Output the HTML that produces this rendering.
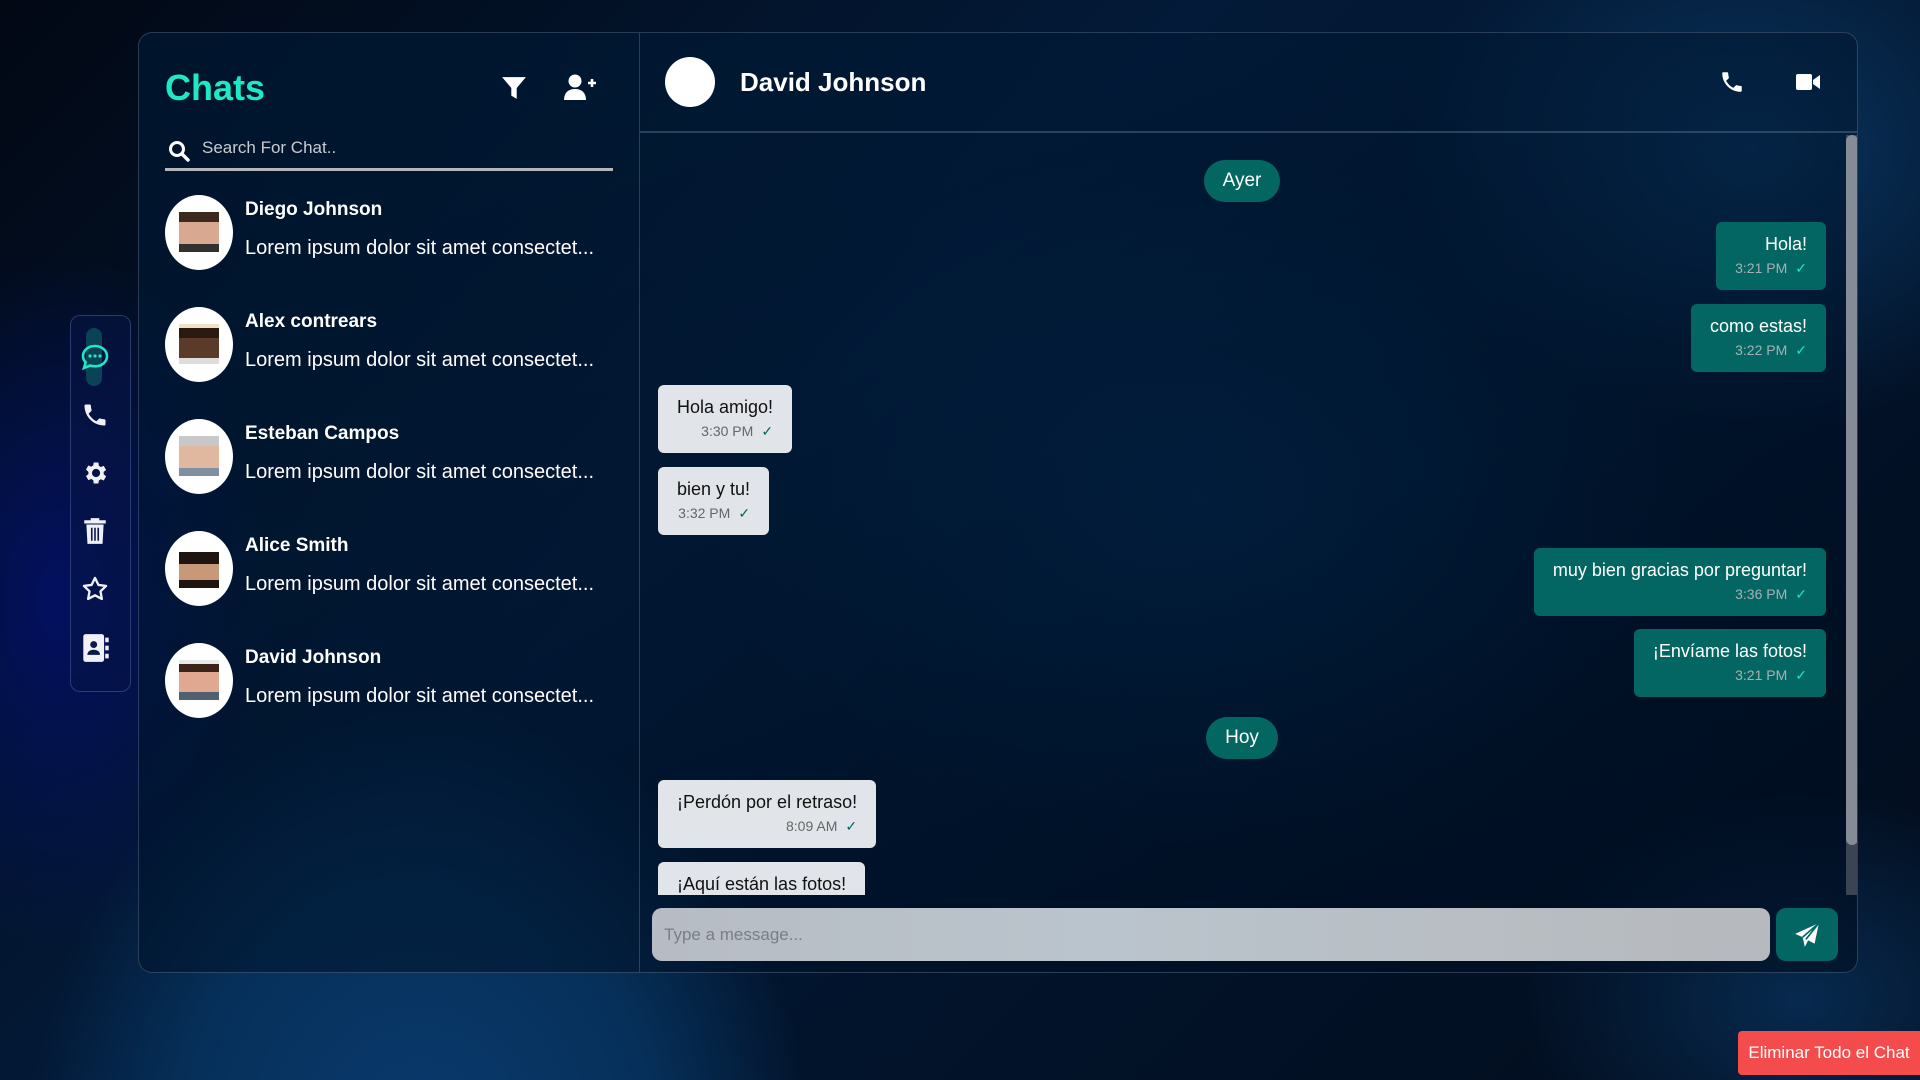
<!DOCTYPE html>
<html><head><meta charset="utf-8"><style>
*{box-sizing:border-box;margin:0;padding:0}
body{width:1920px;height:1080px;overflow:hidden;font-family:"Liberation Sans",sans-serif;position:relative;
background:
radial-gradient(ellipse 520px 600px at 420px 1150px,#0a3a6e 0%,#06305a 45%,rgba(4,30,60,0) 75%),
radial-gradient(ellipse 700px 500px at 1200px 500px,#03284e 0%,rgba(3,30,60,0) 70%),
radial-gradient(ellipse 500px 400px at 1750px 150px,#0a3560 0%,rgba(5,30,60,0) 70%),
radial-gradient(ellipse 400px 300px at 1800px 1000px,#072a4f 0%,rgba(5,30,60,0) 70%),
radial-gradient(ellipse 300px 500px at 60px 600px,#031060 0%,rgba(3,16,96,0) 70%),
linear-gradient(135deg,#020814 0%,#031a38 40%,#021228 70%,#030d1d 100%);}
.panel{position:absolute;left:138px;top:32px;width:1720px;height:941px;border:1px solid rgba(120,140,170,.35);border-radius:14px;
background:linear-gradient(160deg,rgba(0,30,60,.55),rgba(0,12,30,.55));overflow:hidden}
.left{position:absolute;left:0;top:0;width:501px;height:100%;border-right:1px solid rgba(120,140,170,.35)}
.chats{position:absolute;left:26px;top:34px;font-size:36px;font-weight:bold;color:#1de9c6}
.ico{position:absolute}
.search{position:absolute;left:26px;top:96px;width:448px;height:42px;border-bottom:3px solid #b4b6ba}
.search span{position:absolute;left:37px;top:9px;color:#c8cbd0;font-size:17px}
.item{position:absolute;left:26px;width:460px;height:80px}
.av{position:absolute;left:0;top:0;width:68px;height:75px;border-radius:50%;background:#fff}
.av .ph{position:absolute;left:14px;top:17px;width:40px;height:40px;background:linear-gradient(#3a2a20 0 25%,#d8a890 25% 80%,#303030 80%)}
.nm{position:absolute;left:80px;top:4px;color:#fff;font-weight:bold;font-size:19px}
.pv{position:absolute;left:80px;top:42px;color:#fff;font-size:20px;white-space:nowrap}
.right{position:absolute;left:501px;top:0;right:0;height:100%}
.hdr{position:absolute;left:0;right:0;top:0;height:100px;border-bottom:2px solid rgba(120,140,170,.35)}
.hav{position:absolute;left:25px;top:24px;width:50px;height:50px;border-radius:50%;background:#fff}
.hnm{position:absolute;left:100px;top:34px;color:#fff;font-size:26px;font-weight:bold}
.sb{position:absolute;left:1206px;top:102px;width:12px;height:760px;background:#3a4452}
.sb div{position:absolute;left:0;top:0;width:12px;height:710px;background:#858c96;border-radius:6px}
.pill{position:absolute;background:#046660;color:#fff;font-size:19px;height:42px;line-height:42px;border-radius:21px;text-align:center}
.m{position:absolute;border-radius:6px;padding:12px 19px 0;height:68px;font-size:18px;text-align:right;white-space:nowrap}
.m .t{font-size:14px;margin-top:5px;color:#a8b0b4}
.m .t b{font-weight:normal;color:#1de9b6;margin-left:8px;font-size:14px}
.o{background:#036662;color:#fff}
.i{background:#e1e4e8;color:#111}
.i .t{color:#666}.i .t b{color:#046660}
.clip{position:absolute;left:0;top:102px;width:1206px;height:760px;overflow:hidden}
.inp{position:absolute;left:12px;top:875px;width:1118px;height:53px;border-radius:10px;background:linear-gradient(90deg,#b7bcc4,#bac4cc 40%,#b6b9bd);color:#7a7e84;font-size:17px;padding:17px 12px}
.send{position:absolute;left:1136px;top:875px;width:62px;height:53px;border-radius:10px;background:#036662}
.nav{position:absolute;left:70px;top:315px;width:61px;height:377px;border:1px solid rgba(120,140,200,.35);border-radius:10px;background:rgba(5,20,70,.5)}
.del{position:absolute;left:1738px;top:1031px;width:182px;height:44px;background:#f44c4c;color:#fff;font-size:17px;line-height:44px;text-align:center;border-radius:4px 0 0 4px}
</style></head><body>
<div class="nav">
 <div style="position:absolute;left:15px;top:12px;width:16px;height:58px;border-radius:8px;background:#0b4356"></div>
 <svg class="ico" style="left:10px;top:28px" width="28" height="26" viewBox="0 0 28 26"><path d="M14 2C7 2 2 6.5 2 12c0 2.5 1 4.6 2.7 6.3L3 24l6-2.5c1.5.5 3.2.8 5 .8 7 0 12-4.5 12-10S21 2 14 2z" fill="none" stroke="#1de9c6" stroke-width="2.6"/><circle cx="9" cy="12" r="1.6" fill="#1de9c6"/><circle cx="14" cy="12" r="1.6" fill="#1de9c6"/><circle cx="19" cy="12" r="1.6" fill="#1de9c6"/></svg>
 <svg class="ico" style="left:10px;top:85px" width="28" height="28" viewBox="0 0 24 24"><path d="M6.6 10.8c1.4 2.8 3.8 5.1 6.6 6.6l2.2-2.2c.3-.3.7-.4 1-.2 1.1.4 2.3.6 3.6.6.6 0 1 .4 1 1V20c0 .6-.4 1-1 1C10.6 21 3 13.4 3 4c0-.6.4-1 1-1h3.5c.6 0 1 .4 1 1 0 1.3.2 2.5.6 3.6.1.3 0 .7-.2 1z" fill="#f0f0f6"/></svg>
 <svg class="ico" style="left:10px;top:143px" width="28" height="28" viewBox="0 0 24 24"><path d="M19.4 13a7.5 7.5 0 000-2l2.1-1.6-2-3.5-2.5 1a7 7 0 00-1.700-1L14.9 3h-4l-.4 2.6a7 7 0 00-1.7 1l-2.5-1-2 3.5L6.4 11a7.5 7.5 0 000 2l-2.1 1.6 2 3.5 2.5-1a7 7 0 001.7 1l.4 2.9h4l.4-2.6a7 7 0 001.7-1l2.5 1 2-3.5zM12.9 15.5a3.5 3.5 0 110-7 3.5 3.5 0 010 7z" fill="#f0f0f6"/></svg>
 <svg class="ico" style="left:11px;top:201px" width="26" height="28" viewBox="0 0 24 26"><path d="M2 3h20v3H2zM8 1h8v2H8zM4 7h16l-1 18H5z" fill="#f0f0f6"/><path d="M9 10v12M12 10v12M15 10v12" stroke="#0a1a4a" stroke-width="1.5"/></svg>
 <svg class="ico" style="left:10px;top:259px" width="28" height="28" viewBox="0 0 24 24"><path d="M12 2.5l2.9 6 6.6.9-4.8 4.6 1.2 6.5L12 17.4l-5.9 3.1 1.2-6.5L2.5 9.4l6.6-.9z" fill="none" stroke="#f0f0f6" stroke-width="2" stroke-linejoin="round"/></svg>
 <svg class="ico" style="left:11px;top:317px" width="28" height="30" viewBox="0 0 24 26"><rect x="1" y="1" width="18" height="24" rx="2" fill="#f0f0f6"/><rect x="20" y="4" width="3" height="4" fill="#f0f0f6"/><rect x="20" y="11" width="3" height="4" fill="#f0f0f6"/><rect x="20" y="18" width="3" height="4" fill="#f0f0f6"/><circle cx="10" cy="10" r="3" fill="#0a1a4a"/><path d="M4.5 19c0-3 2.5-4.5 5.5-4.5s5.5 1.5 5.5 4.5z" fill="#0a1a4a"/></svg>
</div>
<div class="panel">
 <div class="left">
  <div class="chats">Chats</div>
  <svg class="ico" style="left:362px;top:42px" width="26" height="26" viewBox="0 0 24 24"><path d="M1 2h22l-8.5 10v10l-5-3v-7z" fill="#fff"/></svg>
  <svg class="ico" style="left:424px;top:40px" width="34" height="28" viewBox="0 0 34 28"><circle cx="12" cy="8" r="6.5" fill="#fff"/><path d="M1 27c0-7 4-11 11-11s11 4 11 11z" fill="#fff"/><path d="M25 10h8M29 6v8" stroke="#fff" stroke-width="2.6"/></svg>
  <div class="search"><svg class="ico" style="left:3px;top:11px" width="22" height="22" viewBox="0 0 22 22"><circle cx="9" cy="9" r="6.5" fill="none" stroke="#fff" stroke-width="3"/><path d="M14 14l6 6" stroke="#fff" stroke-width="3.4" stroke-linecap="round"/></svg><span>Search For Chat..</span></div>
  <div class="item" style="top:162px"><div class="av"><div class="ph"></div></div><div class="nm">Diego Johnson</div><div class="pv">Lorem ipsum dolor sit amet consectet...</div></div>
  <div class="item" style="top:274px"><div class="av"><div class="ph" style="background:linear-gradient(#f0e0c8 0 10%,#2a1a10 10% 35%,#5a3a28 35% 85%,#ddd 85%)"></div></div><div class="nm">Alex contrears</div><div class="pv">Lorem ipsum dolor sit amet consectet...</div></div>
  <div class="item" style="top:386px"><div class="av"><div class="ph" style="background:linear-gradient(#c8c8c8 0 25%,#e0b8a0 25% 80%,#8090a0 80%)"></div></div><div class="nm">Esteban Campos</div><div class="pv">Lorem ipsum dolor sit amet consectet...</div></div>
  <div class="item" style="top:498px"><div class="av"><div class="ph" style="background:linear-gradient(#fff 0 10%,#201410 10% 40%,#c89878 40% 80%,#201410 80%)"></div></div><div class="nm">Alice Smith</div><div class="pv">Lorem ipsum dolor sit amet consectet...</div></div>
  <div class="item" style="top:610px"><div class="av"><div class="ph" style="background:linear-gradient(#e8e8e8 0 10%,#3a2418 10% 30%,#e0a890 30% 80%,#506070 80%)"></div></div><div class="nm">David Johnson</div><div class="pv">Lorem ipsum dolor sit amet consectet...</div></div>
 </div>
 <div class="right">
  <div class="hdr"><div class="hav"></div><div class="hnm">David Johnson</div>
   <svg class="ico" style="left:1079px;top:36px" width="26" height="26" viewBox="0 0 24 24"><path d="M6.6 10.8c1.4 2.8 3.8 5.1 6.6 6.6l2.2-2.2c.3-.3.7-.4 1-.2 1.1.4 2.3.6 3.6.6.6 0 1 .4 1 1V20c0 .6-.4 1-1 1C10.6 21 3 13.4 3 4c0-.6.4-1 1-1h3.5c.6 0 1 .4 1 1 0 1.3.2 2.5.6 3.6.1.3 0 .7-.2 1z" fill="#fff"/></svg>
   <svg class="ico" style="left:1156px;top:40px" width="24" height="18" viewBox="0 0 24 18"><rect x="0" y="1" width="16" height="16" rx="2" fill="#fff"/><path d="M17 7l7-5v14l-7-5z" fill="#fff"/></svg>
  </div>
  <div class="clip">
   <div class="pill" style="left:564px;top:25px;width:76px">Ayer</div>
   <div class="m o" style="right:20px;top:87px">Hola!<div class="t">3:21 PM<b>✓</b></div></div>
   <div class="m o" style="right:20px;top:169px">como estas!<div class="t">3:22 PM<b>✓</b></div></div>
   <div class="m i" style="left:18px;top:250px">Hola amigo!<div class="t">3:30 PM<b>✓</b></div></div>
   <div class="m i" style="left:18px;top:332px">bien y tu!<div class="t">3:32 PM<b>✓</b></div></div>
   <div class="m o" style="right:20px;top:413px">muy bien gracias por preguntar!<div class="t">3:36 PM<b>✓</b></div></div>
   <div class="m o" style="right:20px;top:494px">¡Envíame las fotos!<div class="t">3:21 PM<b>✓</b></div></div>
   <div class="pill" style="left:566px;top:582px;width:72px">Hoy</div>
   <div class="m i" style="left:18px;top:645px">¡Perdón por el retraso!<div class="t">8:09 AM<b>✓</b></div></div>
   <div class="m i" style="left:18px;top:727px">¡Aquí están las fotos!<div class="t">8:10 AM<b>✓</b></div></div>
  </div>
  <div class="sb"><div></div></div>
  <div class="inp">Type a message...</div>
  <div class="send"><svg class="ico" style="left:18px;top:14px" width="26" height="26" viewBox="0 0 24 24"><path d="M23 1L1 11l7 3 2 9 3-6 6 3z" fill="#fff"/><path d="M8 14L23 1 11 16" fill="none" stroke="#036662" stroke-width="1.5"/></svg></div>
 </div>
</div>
<div class="del">Eliminar Todo el Chat</div>
</body></html>
